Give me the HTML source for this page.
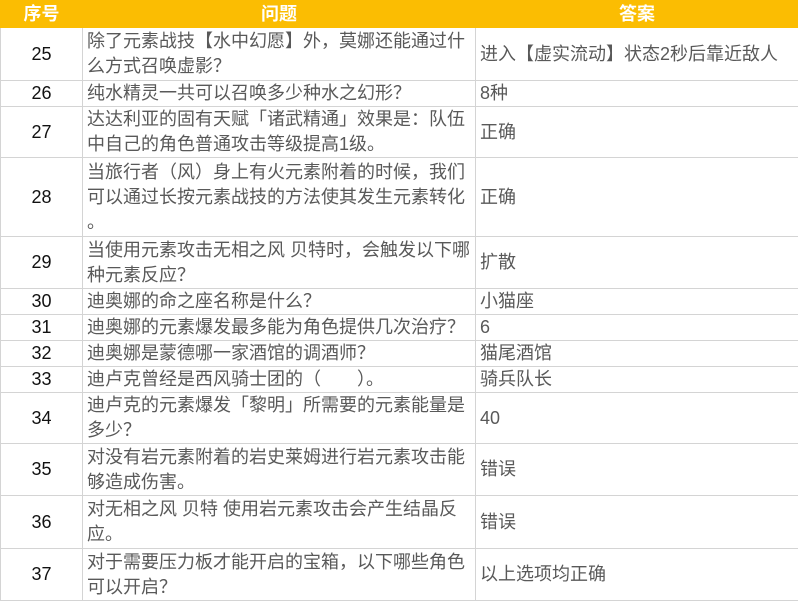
<!DOCTYPE html>
<html><head><meta charset="utf-8"><style>
body{margin:0;width:798px;height:600px;overflow:hidden;background:#fff;font-family:"Liberation Sans","Noto Sans CJK SC",sans-serif;}
table{border-collapse:collapse;table-layout:fixed;width:798px;}
td,th{border:1px solid #d4d4d4;padding:0 0 0 4px;font-size:18px;line-height:25px;color:#595959;white-space:nowrap;overflow:hidden;font-weight:normal;vertical-align:middle;}
th{background:#fbbd02;color:#fff;font-weight:bold;text-align:center;height:26px;line-height:26px;border-color:#fbbd02;padding:0;}
td.n{text-align:center;color:#111;padding:0;}
</style></head><body>
<table>
<colgroup><col style="width:82px"><col style="width:393px"><col style="width:323px"></colgroup>
<tr><th>序号</th><th>问题</th><th>答案</th></tr>
<tr style="height:53px"><td class="n">25</td><td>除了元素战技【水中幻愿】外，莫娜还能通过什<br>么方式召唤虚影？</td><td>进入【虚实流动】状态2秒后靠近敌人</td></tr>
<tr style="height:26px"><td class="n">26</td><td>纯水精灵一共可以召唤多少种水之幻形？</td><td>8种</td></tr>
<tr style="height:51px"><td class="n">27</td><td>达达利亚的固有天赋「诸武精通」效果是：队伍<br>中自己的角色普通攻击等级提高1级。</td><td>正确</td></tr>
<tr style="height:79px"><td class="n">28</td><td>当旅行者（风）身上有火元素附着的时候，我们<br>可以通过长按元素战技的方法使其发生元素转化<br>。</td><td>正确</td></tr>
<tr style="height:52px"><td class="n">29</td><td>当使用元素攻击无相之风 贝特时，会触发以下哪<br>种元素反应？</td><td>扩散</td></tr>
<tr style="height:26px"><td class="n">30</td><td>迪奥娜的命之座名称是什么？</td><td>小猫座</td></tr>
<tr style="height:26px"><td class="n">31</td><td>迪奥娜的元素爆发最多能为角色提供几次治疗？</td><td>6</td></tr>
<tr style="height:26px"><td class="n">32</td><td>迪奥娜是蒙德哪一家酒馆的调酒师？</td><td>猫尾酒馆</td></tr>
<tr style="height:26px"><td class="n">33</td><td>迪卢克曾经是西风骑士团的（　　）。</td><td>骑兵队长</td></tr>
<tr style="height:51px"><td class="n">34</td><td>迪卢克的元素爆发「黎明」所需要的元素能量是<br>多少？</td><td>40</td></tr>
<tr style="height:52px"><td class="n">35</td><td>对没有岩元素附着的岩史莱姆进行岩元素攻击能<br>够造成伤害。</td><td>错误</td></tr>
<tr style="height:53px"><td class="n">36</td><td>对无相之风 贝特 使用岩元素攻击会产生结晶反<br>应。</td><td>错误</td></tr>
<tr style="height:52px"><td class="n">37</td><td>对于需要压力板才能开启的宝箱，以下哪些角色<br>可以开启？</td><td>以上选项均正确</td></tr>
</table>
</body></html>
